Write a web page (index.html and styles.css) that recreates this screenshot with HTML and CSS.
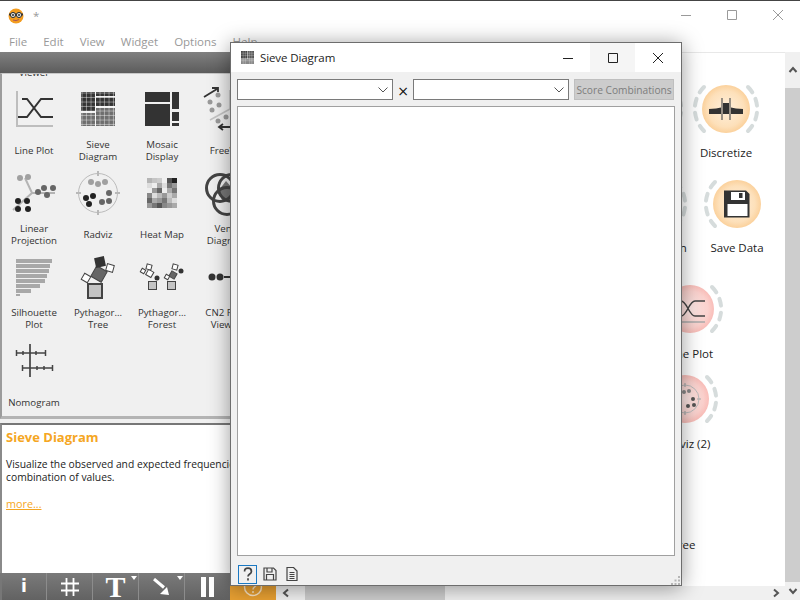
FILE: index.html
```html
<!DOCTYPE html>
<html lang="en">
<head>
<meta charset="utf-8">
<title>Orange</title>
<link rel="stylesheet" href="styles.css">
</head>
<body>
<div class="app">
  <header class="titlebar">
    <svg class="logo" viewBox="0 0 16 16" width="16" height="16">
      <circle cx="8" cy="8" r="7.500" fill="#f39c1f"/>
      <path d="M1 5.500h14v2h-14z" fill="#333"/>
      <circle cx="5" cy="7" r="2.600" fill="#ddd" stroke="#333"/>
      <circle cx="11" cy="7" r="2.600" fill="#ddd" stroke="#333"/>
      <circle cx="5" cy="7" r="1" fill="#333"/>
      <circle cx="11" cy="7" r="1" fill="#333"/>
      <path d="M5 12q3 1.500 6-.5" fill="none" stroke="#a55" stroke-width="1"/>
    </svg>
    <span class="doc">*</span>
    <div class="winctl">
      <svg width="12" height="12" viewBox="0 0 12 12"><path d="M1 6.500h10" stroke="#9a9a9a" fill="none"/></svg>
      <svg width="12" height="12" viewBox="0 0 12 12"><path d="M1.500 1.500h9v9h-9z" stroke="#9a9a9a" fill="none"/></svg>
      <svg width="12" height="12" viewBox="0 0 12 12"><path d="M1 1l10 10M11 1l-10 10" stroke="#9a9a9a" fill="none"/></svg>
    </div>
  </header>
  <nav class="menubar">
    <span>File</span><span>Edit</span><span>View</span><span>Widget</span><span>Options</span><span>Help</span>
  </nav>
  <main class="main">
    <aside class="side">
      <div class="band"></div>
      <div class="toolbox">
        <div class="grid">
          <div class="tool"><div class="ticon"></div><div class="tlabel">Tree<br>Viewer</div></div>
          <div class="tool"><div class="ticon"></div><div class="tlabel">Box Plot</div></div>
          <div class="tool"><div class="ticon"></div><div class="tlabel">Distributions</div></div>
          <div class="tool"><div class="ticon"></div><div class="tlabel">Scatter Plot</div></div>

          <div class="tool">
            <svg class="ticon" viewBox="0 0 40 40"><path d="M3 2v35h36" fill="none" stroke="#bdbdbd" stroke-width="2"/><path d="M4 28h9L27 10h12M8 10h5L27 28h12" fill="none" stroke="#333" stroke-width="2"/></svg>
            <div class="tlabel">Line Plot</div>
          </div>
          <div class="tool">
            <svg class="ticon" viewBox="0 0 40 40">
              <defs><pattern id="g" width="4.500" height="4.500" patternUnits="userSpaceOnUse"><path d="M4 0v4.500M0 4h4.500" stroke="#fff" stroke-opacity=".5" stroke-width=".8"/></pattern></defs>
              <path d="M3 3h14v19h-14zM18 3h19v4h-19zM18 8.500h19v8.500h-19z" fill="#333"/>
              <path d="M3 24h14v13h-14zM18 19h19v18h-19z" fill="#6e6e6e"/>
              <path d="M3 3h34v34h-34z" fill="url(#g)"/>
            </svg>
            <div class="tlabel">Sieve<br>Diagram</div>
          </div>
          <div class="tool">
            <svg class="ticon" viewBox="0 0 40 40"><path d="M3 3h25v10h-25zM3 15h25v22h-25zM30 3h7v17h-7zM30 23h7v9h-7zM30 34h7v3h-7z" fill="#333"/></svg>
            <div class="tlabel">Mosaic<br>Display</div>
          </div>
          <div class="tool">
            <svg class="ticon" viewBox="0 0 40 40">
              <path d="M24 1v19L4 31M24 20l10 8" fill="none" stroke="#c4c4c4" stroke-width="1.500"/>
              <g fill="#9a9a9a"><circle cx="12" cy="6" r="2.500"/><circle cx="4" cy="13" r="2.500"/><circle cx="13" cy="16" r="2.500"/><circle cx="6" cy="21" r="2.500"/><circle cx="20" cy="28" r="2.500"/><circle cx="12" cy="32" r="2.500"/></g>
              <path d="M-2 8L11 0M6 -1h6v4M13 38h14M17 35l-4 3 4 3" fill="none" stroke="#333" stroke-width="1.800"/>
            </svg>
            <div class="tlabel">FreeViz</div>
          </div>

          <div class="tool">
            <svg class="ticon" viewBox="0 0 40 40">
              <path d="M11 5l7 15h23M18 20L-1 37" fill="none" stroke="#b4b4b4" stroke-width="2"/>
              <g fill="#a0a0a0"><circle cx="6" cy="5" r="3"/><circle cx="14" cy="4" r="3"/></g>
              <g fill="#666"><circle cx="24" cy="19" r="3"/><circle cx="30" cy="15" r="3"/><circle cx="39" cy="15" r="3"/><circle cx="33" cy="22" r="3"/></g>
              <g fill="#222"><circle cx="4" cy="28" r="3"/><circle cx="13" cy="28" r="3"/><circle cx="4" cy="36" r="3"/><circle cx="14" cy="36" r="3"/></g>
            </svg>
            <div class="tlabel">Linear<br>Projection</div>
          </div>
          <div class="tool">
            <svg class="ticon" viewBox="0 0 40 40">
              <circle cx="20" cy="20" r="19.500" fill="none" stroke="#bbb" stroke-width="1"/>
              <path d="M20 -2v5M20 37v5M-2 20h5M37 20h5" stroke="#b8b8b8" stroke-width="2"/>
              <g fill="#a0a0a0"><circle cx="13" cy="9" r="3"/><circle cx="20" cy="11" r="3"/><circle cx="27" cy="9" r="3"/></g>
              <g fill="#666"><circle cx="31" cy="20" r="3"/><circle cx="24" cy="29" r="3"/><circle cx="31" cy="28" r="3"/></g>
              <g fill="#222"><circle cx="8" cy="25" r="3"/><circle cx="15" cy="23" r="3"/><circle cx="11" cy="31" r="3"/></g>
            </svg>
            <div class="tlabel">Radviz</div>
          </div>
          <div class="tool">
            <svg class="ticon" viewBox="0 0 40 40">
              <g>
                <path d="M5 5h5v5h-5z" fill="#b5b5b5"/><path d="M10 5h5v5h-5z" fill="#c5c5c5"/><path d="M15 5h5v5h-5z" fill="#ccc"/><path d="M25 5h5v5h-5z" fill="#555"/><path d="M30 5h5v5h-5z" fill="#222"/>
                <path d="M5 10h5v5h-5z" fill="#ddd"/><path d="M10 10h5v5h-5z" fill="#eee"/><path d="M15 10h5v5h-5z" fill="#aaa"/><path d="M20 10h5v5h-5z" fill="#ddd"/><path d="M25 10h5v5h-5z" fill="#777"/><path d="M30 10h5v5h-5z" fill="#999"/>
                <path d="M5 15h5v5h-5z" fill="#eee"/><path d="M10 15h5v5h-5z" fill="#999"/><path d="M15 15h5v5h-5z" fill="#666"/><path d="M20 15h5v5h-5z" fill="#eee"/><path d="M25 15h5v5h-5z" fill="#aaa"/><path d="M30 15h5v5h-5z" fill="#777"/>
                <path d="M5 20h5v5h-5z" fill="#888"/><path d="M10 20h5v5h-5z" fill="#ddd"/><path d="M15 20h5v5h-5z" fill="#bbb"/><path d="M20 20h5v5h-5z" fill="#999"/><path d="M25 20h5v5h-5z" fill="#ccc"/><path d="M30 20h5v5h-5z" fill="#aaa"/>
                <path d="M5 25h5v5h-5z" fill="#666"/><path d="M10 25h5v5h-5z" fill="#aaa"/><path d="M15 25h5v5h-5z" fill="#999"/><path d="M20 25h5v5h-5z" fill="#777"/><path d="M25 25h5v5h-5z" fill="#bbb"/><path d="M30 25h5v5h-5z" fill="#ddd"/>
                <path d="M5 30h5v5h-5z" fill="#999"/><path d="M10 30h5v5h-5z" fill="#777"/><path d="M15 30h5v5h-5z" fill="#555"/><path d="M20 30h5v5h-5z" fill="#888"/><path d="M25 30h5v5h-5z" fill="#999"/><path d="M30 30h5v5h-5z" fill="#aaa"/>
              </g>
            </svg>
            <div class="tlabel">Heat Map</div>
          </div>
          <div class="tool">
            <svg class="ticon" viewBox="0 0 40 40">
              <path d="M20 8l7 8-2 11h-9l-3-10z" fill="#777"/>
              <circle cx="14" cy="15" r="13.500" fill="none" stroke="#444" stroke-width="3"/>
              <circle cx="26" cy="15" r="13.500" fill="none" stroke="#444" stroke-width="3"/>
              <circle cx="21" cy="28" r="13.500" fill="none" stroke="#444" stroke-width="3"/>
            </svg>
            <div class="tlabel">Venn<br>Diagram</div>
          </div>

          <div class="tool">
            <svg class="ticon" viewBox="0 0 40 40">
              <g fill="#a8a8a8"><path d="M2 2h36v4h-36zM2 7h34v4h-34zM2 12h33v4h-33zM2 17h31v4h-31zM2 22h29v4h-29zM2 27h24v4h-24zM2 32h15v4h-15zM2 37h4v2h-4z"/></g>
            </svg>
            <div class="tlabel">Silhouette<br>Plot</div>
          </div>
          <div class="tool">
            <svg class="ticon" viewBox="0 0 40 40">
              <rect x="10" y="27" width="14" height="14" fill="#c4c4c4" stroke="#444" stroke-width="2"/>
              <rect x="15" y="11" width="12" height="12" fill="#666" stroke="#444" transform="rotate(30 21 17)"/>
              <rect x="17" y="0" width="10" height="10" fill="#333" transform="rotate(-12 22 5)"/>
              <rect x="4.500" y="17.500" width="7" height="7" fill="#fff" stroke="#444" transform="rotate(30 8 21)"/>
              <rect x="28.500" y="7.500" width="7" height="7" fill="#fff" stroke="#444" transform="rotate(15 32 11)"/>
            </svg>
            <div class="tlabel">Pythagor...<br>Tree</div>
          </div>
          <div class="tool">
            <svg class="ticon" viewBox="0 0 40 40">
              <rect x="6.500" y="24.500" width="8" height="8" fill="#c4c4c4" stroke="#444"/>
              <rect x="5" y="13.500" width="6" height="6" fill="#fff" stroke="#444" transform="rotate(30 8 16)"/>
              <rect x="4.500" y="7.500" width="5" height="5" fill="#fff" stroke="#444" transform="rotate(15 7 10)"/>
              <rect x="-1" y="12" width="4" height="4" fill="#fff" stroke="#444" transform="rotate(30 1 14)"/>
              <circle cx="15" cy="21" r="2.500" fill="#333"/>
              <rect x="25.500" y="24.500" width="8" height="8" fill="#c4c4c4" stroke="#444"/>
              <rect x="28" y="15" width="6" height="6" fill="#666" stroke="#444" transform="rotate(30 31 18)"/>
              <rect x="30.500" y="7.500" width="5" height="5" fill="#fff" stroke="#444" transform="rotate(15 33 10)"/>
              <rect x="23" y="18" width="4" height="4" fill="#fff" stroke="#444" transform="rotate(30 25 20)"/>
              <circle cx="39" cy="14" r="2.500" fill="#333"/>
            </svg>
            <div class="tlabel">Pythagor...<br>Forest</div>
          </div>
          <div class="tool">
            <svg class="ticon" viewBox="0 0 40 40">
              <circle cx="6" cy="20" r="3.500" fill="#333"/><circle cx="14" cy="20" r="3.500" fill="#333"/><path d="M18 20h18" stroke="#333" stroke-width="2"/>
            </svg>
            <div class="tlabel">CN2 Rule<br>Viewer</div>
          </div>

          <div class="tool">
            <svg class="ticon" viewBox="0 0 40 40">
              <path d="M16 3v33M2 12h30M8 27h31" fill="none" stroke="#444" stroke-width="1.700"/>
              <path d="M2.500 9v6M9 10v4M22 10v4M31.500 9v6M8.500 24v6M23 25v4M30 25v4M38.500 24v6" stroke="#444" stroke-width="1.500"/>
            </svg>
            <div class="tlabel">Nomogram</div>
          </div>
        </div>
      </div>
      <section class="desc">
        <h2 class="dtitle">Sieve Diagram</h2>
        <p class="dtext">Visualize the observed and expected frequencies for a combination of values.</p>
        <a class="dmore">more...</a>
      </section>
      <div class="tbar">
        <div class="tbtn"><span class="ti">i</span></div>
        <div class="tbtn">
          <svg width="20" height="20" viewBox="0 0 20 20"><path d="M6.500 1v18M13.500 1v18M1 6.500h18M1 13.500h18" stroke="#fff" stroke-width="1.800" fill="none"/></svg>
        </div>
        <div class="tbtn"><span class="tt">T</span><i class="corner"></i></div>
        <div class="tbtn">
          <svg width="18" height="18" viewBox="0 0 18 18"><path d="M1 1l10 8.500" stroke="#fff" stroke-width="3" fill="none"/><path d="M16 17l-9-1 7-7z" fill="#fff"/></svg>
          <i class="corner"></i>
        </div>
        <div class="tbtn">
          <svg width="13" height="20" viewBox="0 0 13 20"><path d="M0 0h5v20h-5zM8 0h5v20h-5z" fill="#fff"/></svg>
        </div>
        <div class="tbtn help">
          <svg width="20" height="20" viewBox="0 0 20 20"><circle cx="10" cy="10" r="8.500" fill="none" stroke="#fff" stroke-opacity=".7" stroke-width="1.500"/><path d="M7 8c0-4 6-4 6 0 0 2-3 2-3 4.500M10 14v2" fill="none" stroke="#fff" stroke-opacity=".7" stroke-width="1.500"/></svg>
        </div>
      </div>
    </aside>
    <div class="center">
      <div class="canvas">
        <div class="node n-sel">
          <svg class="arc" viewBox="0 0 70 70"><circle class="c-orange" cx="35" cy="35" r="24"/><path class="dash" d="M57 13A31 31 0 0 1 57 57"/></svg>
          <div class="nlabel">Select Rows</div>
        </div>
        <div class="node n-dis">
          <svg class="arc" viewBox="0 0 70 70">
            <defs><radialGradient id="go"><stop offset="0" stop-color="#fff0dc"/><stop offset=".75" stop-color="#fde0ba"/><stop offset="1" stop-color="#fbd19c"/></radialGradient>
            <radialGradient id="gp"><stop offset="0" stop-color="#fde8e6"/><stop offset=".75" stop-color="#fbd2ce"/><stop offset="1" stop-color="#f9bdb8"/></radialGradient></defs>
            <circle class="c-orange" cx="35" cy="35" r="24"/>
            <path class="dash" d="M13 13A31 31 0 0 0 13 57M57 13A31 31 0 0 1 57 57"/>
            <path d="M18 40v-5l7-.5 5-1v6.500zM32 40V29h6v11zM40 40v-6.500l5 1 7 .5v5z" fill="#333"/>
            <path d="M31 24v22M39 24v22" stroke="#555" stroke-width="1.200"/>
          </svg>
          <div class="nlabel">Discretize</div>
        </div>
        <div class="node n-edit">
          <svg class="arc" viewBox="0 0 70 70"><circle class="c-orange" cx="35" cy="35" r="24"/><path class="dash" d="M57 13A31 31 0 0 1 57 57"/></svg>
          <div class="nlabel">Edit Domain</div>
        </div>
        <div class="node n-save">
          <svg class="arc" viewBox="0 0 70 70">
            <circle class="c-orange" cx="35" cy="35" r="24"/>
            <path class="dash" d="M13 13A31 31 0 0 0 13 57"/>
            <path d="M22 21.500h22l3.500 3.500v23.500h-25.500z" fill="#333"/>
            <path d="M25.500 35h20v12h-20z" fill="#fff"/>
            <path d="M29 23h14v8h-14z" fill="#fff"/><path d="M37 24h3.500v5h-3.500z" fill="#333"/>
          </svg>
          <div class="nlabel">Save Data</div>
        </div>
        <div class="node n-line">
          <svg class="arc" viewBox="0 0 70 70">
            <circle class="c-pink" cx="35" cy="35" r="24"/>
            <path class="dash" d="M57 13A31 31 0 0 1 57 57"/>
            <path d="M16 42h10c6 0 8-15 14-15h10M16 27h10c6 0 8 15 14 15h10" fill="none" stroke="#444" stroke-width="1.500"/>
            <path d="M16 48h34" stroke="#aaa" stroke-width="1.500"/>
          </svg>
          <div class="nlabel">Line Plot</div>
        </div>
        <div class="node n-rad">
          <svg class="arc" viewBox="0 0 70 70">
            <circle class="c-pink" cx="35" cy="35" r="24"/>
            <path class="dash" d="M57 13A31 31 0 0 1 57 57"/>
            <circle cx="35" cy="35" r="14" fill="none" stroke="#bbb"/>
            <path d="M35 19v4M35 47v4M19 35h4M47 35h4" stroke="#aaa" stroke-width="1.200"/>
            <g fill="#888"><circle cx="34" cy="28" r="2"/><circle cx="39" cy="27" r="2"/></g>
            <g fill="#555"><circle cx="43" cy="35" r="2"/><circle cx="44" cy="41" r="2"/><circle cx="38" cy="42" r="2"/></g>
            <g fill="#222"><circle cx="27" cy="37" r="2"/><circle cx="30" cy="34" r="2"/></g>
          </svg>
          <div class="nlabel">Radviz (2)</div>
        </div>
        <div class="node n-tree">
          <svg class="arc" viewBox="0 0 70 70"><circle class="c-pink" cx="35" cy="35" r="24"/></svg>
          <div class="nlabel">Pythagorean Tree</div>
        </div>
      </div>
      <div class="hscroll">
        <span class="sarrow">
          <svg width="10" height="10" viewBox="0 0 10 10"><path d="M7 1.500l-4 3.500 4 3.500" class="chev"/></svg>
        </span>
        <div class="hthumb"></div>
        <span class="sarrow right">
          <svg width="10" height="10" viewBox="0 0 10 10"><path d="M3 1.500l4 3.500-4 3.500" class="chev"/></svg>
        </span>
      </div>
    </div>
    <div class="vscroll">
      <span class="varrow top"><svg width="10" height="10" viewBox="0 0 10 10"><path d="M1.500 7l3.500-4 3.500 4" class="chev"/></svg></span>
      <div class="vthumb"></div>
      <span class="varrow"><svg width="10" height="10" viewBox="0 0 10 10"><path d="M1.500 3l3.500 4 3.500-4" class="chev"/></svg></span>
    </div>
  </main>

  <section class="window">
    <div class="wtitle">
      <svg class="wicon" width="13" height="13" viewBox="0 0 12 12">
        <path d="M0 0h6v7h-6z" fill="#444"/><path d="M6.500 0h5.500v7h-5.500z" fill="#555"/><path d="M0 7.500h12v4.500h-12z" fill="#888"/>
        <path d="M2 0v12M4 0v12M8 0v12M10 0v12M0 2h12M0 4h12M0 9h12" stroke="#fff" stroke-opacity=".4" stroke-width=".6"/>
      </svg>
      <span class="wname">Sieve Diagram</span>
      <div class="wctl">
        <span class="wb"><svg width="12" height="12" viewBox="0 0 12 12"><path d="M1 6.500h10" stroke="#222" fill="none"/></svg></span>
        <span class="wb hover"><svg width="12" height="12" viewBox="0 0 12 12"><path d="M1.500 1.500h9v9h-9z" stroke="#222" fill="none"/></svg></span>
        <span class="wb last"><svg width="12" height="12" viewBox="0 0 12 12"><path d="M1 1l10 10M11 1l-10 10" stroke="#222" fill="none"/></svg></span>
      </div>
    </div>
    <div class="wbody">
      <div class="wtop">
        <div class="combo"><svg width="10" height="6" viewBox="0 0 10 6"><path d="M.5 .5l4.500 4.500 4.500-4.500" fill="none" stroke="#555"/></svg></div>
        <span class="times">×</span>
        <div class="combo"><svg width="10" height="6" viewBox="0 0 10 6"><path d="M.5 .5l4.500 4.500 4.500-4.500" fill="none" stroke="#555"/></svg></div>
        <button class="score" type="button">Score Combinations</button>
      </div>
      <div class="plot"></div>
      <div class="wstatus">
        <span class="sbtn active">
          <svg width="12" height="14" viewBox="0 0 14 16"><path d="M3 5c0-5 8-5 8 0 0 3-4 3-4 6" fill="none" stroke="#444" stroke-width="2"/><path d="M7 13v2.500" stroke="#444" stroke-width="2"/></svg>
        </span>
        <span class="sbtn">
          <svg width="14" height="14" viewBox="0 0 14 14"><path d="M1 1h9.500l2.500 2.500v9.500h-12z" fill="none" stroke="#444" stroke-width="1.200"/><path d="M4 1v4h5v-4M3.500 13v-5.500h7v5.500" fill="none" stroke="#444" stroke-width="1.200"/></svg>
        </span>
        <span class="sbtn">
          <svg width="14" height="14" viewBox="0 0 14 14"><path d="M2 .5h6.500l3.500 3.500v9.500h-10z" fill="none" stroke="#444" stroke-width="1.200"/><path d="M4.500 5.500h5M4.500 7.500h5M4.500 9.500h5M4.500 11.500h5" stroke="#444"/></svg>
        </span>
        <svg class="grip" width="10" height="10" viewBox="0 0 10 10"><path d="M8 1h2v2h-2zM8 4.500h2v2h-2zM8 8h2v2h-2zM4.500 4.500h2v2h-2zM4.500 8h2v2h-2zM1 8h2v2h-2z" fill="#b5b5b5"/></svg>
      </div>
    </div>
  </section>
</div>
</body>
</html>
```

FILE: styles.css
```css
* { box-sizing: border-box; }
html, body { margin: 0; padding: 0; }
body { width: 800px; height: 600px; overflow: hidden; background: #fff; font-family: "Open Sans", "Liberation Sans", sans-serif; }

.app { position: relative; width: 800px; height: 600px; display: flex; flex-direction: column; overflow: hidden; border-top: 1px solid #444; }

.titlebar { height: 29px; flex: none; display: flex; align-items: center; padding-left: 8px; background: #fff; }
.logo { flex: none; }
.doc { margin-left: 9px; font-size: 11.500px; color: #999; }
.winctl { margin-left: auto; display: flex; gap: 34px; padding-right: 16px; margin-top: -1px; }

.menubar { height: 22px; flex: none; display: flex; gap: 16px; padding-left: 9px; font-size: 11.500px; line-height: 23px; color: #999; background: #fff; }

.main { flex: 1; min-height: 0; display: flex; }

.side { width: 276px; flex: none; display: flex; flex-direction: column; background: #f0f0f0; }
.band { height: 21px; flex: none; background: linear-gradient(#808080, #5c5c5c); }
.toolbox { height: 346px; flex: none; overflow: hidden; border-left: 2px solid #9c9c9c; border-top: 1px solid #c8c8c8; border-bottom: 3px solid #b4b4b4; margin-bottom: 4px; }
.grid { display: grid; grid-template-columns: repeat(4, 64px); grid-auto-rows: 84px; margin-top: -73px; }
.tool { display: flex; flex-direction: column; align-items: center; padding-top: 4px; }
.ticon { width: 40px; height: 40px; flex: none; display: block; overflow: visible; }
.tlabel { height: 24px; margin-top: 10px; display: flex; align-items: center; text-align: center; font-size: 9.700px; line-height: 12px; color: #333; white-space: nowrap; }

.desc { height: 150px; flex: none; background: #fff; border-left: 2px solid #8a8a8a; border-top: 2px solid #777; padding: 4px 4px; color: #222; }
.dtitle { margin: 0; font-size: 13px; line-height: 16px; font-weight: 700; color: #f5a623; }
.dtext { margin: 13px 0 0; font-size: 10.300px; line-height: 13px; color: #222; width: 270px; }
.dmore { display: block; margin-top: 13px; font-size: 10.800px; line-height: 13px; color: #f5a623; text-decoration: underline; }

.tbar { height: 27px; flex: none; display: flex; background: linear-gradient(#7a7a7a, #626262); }
.tbtn { width: 46px; flex: none; position: relative; display: flex; align-items: center; justify-content: center; border-left: 1px solid #8c8c8c; color: #fff; }
.tbtn:first-child { border-left: 2px solid #777; }
.ti { font-family: "DejaVu Sans", sans-serif; font-weight: 700; font-size: 17px; line-height: 27px; }
.tt { font-family: "Liberation Serif", serif; font-weight: 700; font-size: 30px; line-height: 27px; }
.corner { position: absolute; top: 3px; right: 1px; width: 0; height: 0; border-left: 3px solid transparent; border-right: 3px solid transparent; border-top: 4px solid #fff; }
.help { background: #e8a032; border-left: 0; }

.center { flex: 1; min-width: 0; display: flex; flex-direction: column; }
.canvas { flex: 1; position: relative; overflow: hidden; background: #fff; border-top: 1px solid #e8e8e8; }
.node { position: absolute; width: 120px; display: flex; flex-direction: column; align-items: center; }
.arc { width: 70px; height: 70px; flex: none; display: block; }
.c-orange { fill: url(#go); }
.c-pink { fill: url(#gp); }
.dash { fill: none; stroke: #d6dcdc; stroke-width: 4; stroke-linecap: round; stroke-dasharray: 7 7; }
.nlabel { margin-top: 2px; font-size: 11.500px; line-height: 16px; color: #222; white-space: nowrap; }
.n-sel .nlabel, .n-dis .nlabel, .n-edit .nlabel, .n-save .nlabel { margin-top: 1px; }
.n-sel { left: 314px; top: 21px; }
.n-dis { left: 390px; top: 21px; }
.n-edit { left: 318px; top: 116px; }
.n-save { left: 401px; top: 116px; }
.n-line { left: 354px; top: 221px; }
.n-rad { left: 349px; top: 311px; }
.n-tree { left: 312px; top: 412px; }

.hscroll { height: 14px; flex: none; display: flex; align-items: center; background: #f0f0f0; }
.sarrow { width: 20px; flex: none; display: flex; align-items: center; justify-content: center; }
.sarrow.right { margin-left: auto; width: 18px; }
.hthumb { width: 140px; height: 14px; background: #cdcdcd; margin-left: 9px; }
.chev { fill: none; stroke: #555; stroke-width: 2; }

.vscroll { width: 15px; flex: none; display: flex; flex-direction: column; background: #f0f0f0; }
.varrow { height: 18px; flex: none; display: flex; align-items: center; justify-content: center; }
.varrow.top { height: 36px; }
.vthumb { flex: 1; background: #cdcdcd; }

.window { position: absolute; left: 230px; top: 41px; width: 452px; height: 544px; display: flex; flex-direction: column; background: #f0f0f0; border: 1px solid #6d6d6d; box-shadow: 0 2px 20px rgba(0, 0, 0, .4); }
.wtitle { height: 29px; flex: none; display: flex; align-items: center; padding-left: 10px; background: #fff; }
.wicon { flex: none; }
.wname { margin-left: 6px; font-size: 11.500px; letter-spacing: -.1px; color: #222; }
.wctl { margin-left: auto; display: flex; height: 100%; }
.wb { width: 45px; display: flex; align-items: center; justify-content: center; }
.wb.last { width: 46px; }
.wb.hover { background: #f5f5f5; }
.wbody { flex: 1; min-height: 0; display: flex; flex-direction: column; padding: 7px 6px 0; }
.wtop { height: 21px; flex: none; display: flex; align-items: stretch; }
.combo { width: 156px; background: #fff; border: 1px solid #7a7a7a; display: flex; align-items: center; justify-content: flex-end; padding: 1px 4px 0 0; }
.times { width: 20px; text-align: center; font-family: "DejaVu Sans", sans-serif; font-size: 14px; line-height: 24px; color: #111; }
.score { width: 100px; margin-left: 5px; padding: 1px 0 0; background: #cccccc; border: 1px solid #bfbfbf; font-family: inherit; font-size: 10.200px; color: #7d7d7d; white-space: nowrap; }
.plot { flex: 1; margin: 6px 0 0; background: #fff; border: 1px solid #a0a0a0; width: 438px; }
.wstatus { height: 29px; flex: none; display: flex; align-items: center; gap: 3px; padding: 7px 0 0 1px; position: relative; }
.sbtn { width: 19px; height: 19px; display: flex; align-items: center; justify-content: center; border: 1px solid transparent; }
.sbtn.active { border-color: #1a78c2; }
.grip { position: absolute; right: -5px; bottom: 0; }
```
